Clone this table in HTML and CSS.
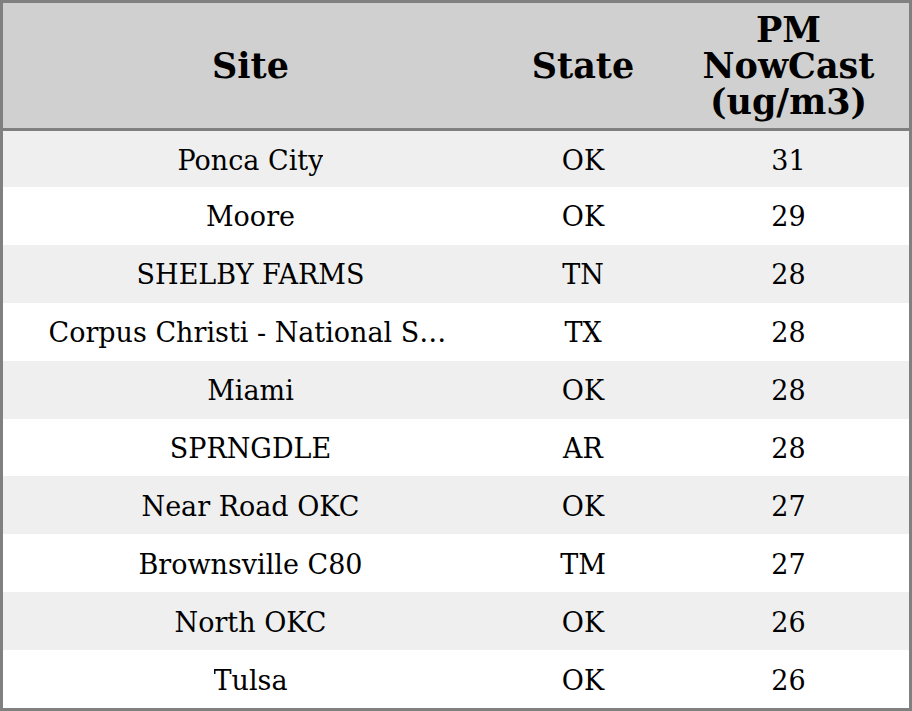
FILE: index.html
```html
<!DOCTYPE html>
<html>
<head>
<meta charset="utf-8">
<link rel="stylesheet" href="styles.css">
</head>
<body>
<div class="table">
  <div class="row head">
    <div class="cell site">Site</div>
    <div class="cell state">State</div>
    <div class="cell pm">PM<br>NowCast<br>(ug/m3)</div>
  </div>
  <div class="row first odd"><div class="cell site"><span class="txt">Ponca City</span></div><div class="cell state">OK</div><div class="cell pm">31</div></div>
  <div class="row"><div class="cell site"><span class="txt">Moore</span></div><div class="cell state">OK</div><div class="cell pm">29</div></div>
  <div class="row odd"><div class="cell site"><span class="txt">SHELBY FARMS</span></div><div class="cell state">TN</div><div class="cell pm">28</div></div>
  <div class="row"><div class="cell site"><span class="txt">Corpus Christi - National Seashore</span></div><div class="cell state">TX</div><div class="cell pm">28</div></div>
  <div class="row odd"><div class="cell site"><span class="txt">Miami</span></div><div class="cell state">OK</div><div class="cell pm">28</div></div>
  <div class="row"><div class="cell site"><span class="txt">SPRNGDLE</span></div><div class="cell state">AR</div><div class="cell pm">28</div></div>
  <div class="row odd"><div class="cell site"><span class="txt">Near Road OKC</span></div><div class="cell state">OK</div><div class="cell pm">27</div></div>
  <div class="row"><div class="cell site"><span class="txt">Brownsville C80</span></div><div class="cell state">TM</div><div class="cell pm">27</div></div>
  <div class="row odd"><div class="cell site"><span class="txt">North OKC</span></div><div class="cell state">OK</div><div class="cell pm">26</div></div>
  <div class="row"><div class="cell site"><span class="txt">Tulsa</span></div><div class="cell state">OK</div><div class="cell pm">26</div></div>
</div>
</body>
</html>
```
FILE: styles.css
```css
html, body {
  margin: 0;
  padding: 0;
  background: #ffffff;
}
.table {
  width: 912px;
  height: 711px;
  box-sizing: border-box;
  border: 3px solid #808080;
  display: flex;
  flex-direction: column;
  font-family: "DejaVu Serif", serif;
  color: #000;
}
.row {
  display: flex;
  height: 57.9px;
  flex: none;
  background: #ffffff;
}
.row.odd {
  background: #efefef;
}
.row.first {
  height: 56px;
}
.row.head {
  height: 125px;
  background: #d0d0d0;
  border-bottom: 3px solid #808080;
  font-weight: bold;
}
.cell {
  display: flex;
  align-items: center;
  justify-content: center;
  text-align: center;
  font-size: 27px;
  padding-top: 2px;
  box-sizing: border-box;
}
.head .cell {
  font-size: 35px;
  line-height: 36px;
  padding-top: 0;
}
.site {
  width: 495px;
}
.state {
  width: 170px;
}
.pm {
  width: 241px;
}
.txt {
  display: inline-block;
  max-width: 404px;
  white-space: nowrap;
  overflow: hidden;
  text-overflow: ellipsis;
}
```
